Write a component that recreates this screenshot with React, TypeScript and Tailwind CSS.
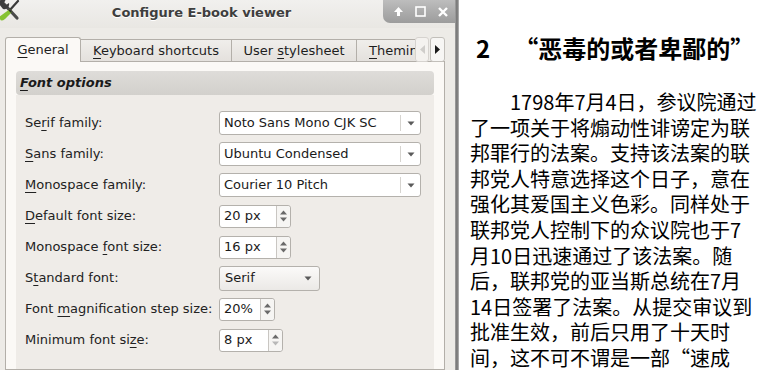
import React from "react";

const ui = { fontFamily: '"DejaVu Sans", "Liberation Sans", sans-serif' };
const cjk = { fontFamily: '"Noto Sans CJK SC", "Noto Sans", sans-serif' };

function U({ children }: { children: React.ReactNode }) {
  return <span className="underline underline-offset-[3px] decoration-1">{children}</span>;
}

function DownArrow({ color = "#5a5a5a" }: { color?: string }) {
  return (
    <svg width="8" height="5" viewBox="0 0 8 5">
      <path d="M0.5 0.5h7L4 4.5z" fill={color} />
    </svg>
  );
}

function Combo({ value, width }: { value: string; width: string }) {
  return (
    <div className={`flex h-[24px] ${width} items-stretch rounded-[3px] border border-[#b4b1ac] bg-white`}>
      <div className="flex flex-1 items-center pl-[4px] text-[13px] text-[#1a1a1a]">{value}</div>
      <div className="my-[3px] w-px bg-[#d6d4d0]" />
      <div className="flex w-[19px] items-center justify-center">
        <DownArrow />
      </div>
    </div>
  );
}

function Spin({ value, width, downOff }: { value: string; width: string; downOff?: boolean }) {
  return (
    <div className={`flex h-[23px] ${width} items-stretch rounded-[3px] border border-[#b4b1ac] bg-white`}>
      <div className="flex flex-1 items-center pl-[4px] text-[13px] text-[#1a1a1a]">{value}</div>
      <div className="flex w-[14px] flex-col items-center justify-center gap-[2px] rounded-r-[3px] border-l border-[#c9c6c2] bg-[#f6f5f3]">
        <svg width="7" height="5" viewBox="0 0 7 5">
          <path d="M0 4.5L3.5 0.5L7 4.5z" fill="#6a6a6a" />
        </svg>
        <svg width="7" height="5" viewBox="0 0 7 5">
          <path d="M0 0.5h7L3.5 4.5z" fill={downOff ? "#b8b8b8" : "#6a6a6a"} />
        </svg>
      </div>
    </div>
  );
}

function Row({ label, children }: { label: React.ReactNode; children: React.ReactNode }) {
  return (
    <div className="flex h-[24px] items-center">
      <div className="w-[194px] text-[13px] text-[#222]">{label}</div>
      {children}
    </div>
  );
}

// wrench + screwdriver, cut off at the window's left edge
function ToolIcon() {
  return (
    <svg width="20" height="24" viewBox="0 0 20 24">
      <path d="M4 4 L17 18" stroke="#4a4a4a" strokeWidth="3.2" strokeLinecap="round" />
      <path d="M-1 4 A5 5 0 0 1 6 -1 L4 3 L6 5 L9 3 A5 5 0 0 1 3 9 Z" fill="#3c3c3c" />
      <path d="M18 1 L9 11" stroke="#3a3a3a" strokeWidth="2.2" strokeLinecap="round" />
      <path d="M10 9 L12 12 L5 19 Q1 22 0 19 L-1 17 Z" fill="#86c232" />
      <path d="M10 9 L12 12 L11 13 L8.5 10.5 Z" fill="#2e2e2e" />
    </svg>
  );
}

const lines = [
  "了一项关于将煽动性诽谤定为联",
  "邦罪行的法案。支持该法案的联",
  "邦党人特意选择这个日子，意在",
  "强化其爱国主义色彩。同样处于",
  "联邦党人控制下的众议院也于7",
  "月10日迅速通过了该法案。随",
  "后，联邦党的亚当斯总统在7月",
  "14日签署了法案。从提交审议到",
  "批准生效，前后只用了十天时",
  "间，这不可不谓是一部“速成",
];

export default function App() {
  return (
    <div className="flex h-[370px] w-[773px] overflow-hidden bg-white">
      <div className="flex w-[455px] flex-col bg-[#edebe7]" style={ui}>
        <div className="flex h-[28px] items-start bg-gradient-to-b from-[#f1f0ee] to-[#e9e7e3]">
          <div className="h-[24px] w-[20px] overflow-hidden">
            <ToolIcon />
          </div>
          <div className="flex h-[26px] flex-1 items-center justify-center text-[13px] font-bold text-[#3e3e3e] [text-shadow:0_1px_0_#ffffff]">
            Configure E-book viewer
          </div>
          <div className="flex h-[23px] w-[72px] items-center justify-around rounded-bl-[7px] bg-gradient-to-b from-[#bdbdbd] to-[#9c9c9c] pl-[4px]">
            <svg width="11" height="11" viewBox="0 0 11 11">
              <path d="M5.5 1L10 6H7v4H4V6H1z" fill="#fff" />
            </svg>
            <svg width="11" height="11" viewBox="0 0 11 11">
              <rect x="1" y="1" width="9" height="9" fill="none" stroke="#fff" strokeWidth="1.6" />
            </svg>
            <svg width="12" height="12" viewBox="0 0 12 12">
              <path d="M2 2L10 10M10 2L2 10" stroke="#fff" strokeWidth="2.4" />
            </svg>
          </div>
        </div>

        <div className="flex flex-1 flex-col pl-[5px] pr-[10px] pt-[9px]">
          <div className="relative flex h-[24px] items-end text-[13px] text-[#1e1e1e]">
            <div className="relative z-10 -mb-px flex h-[25px] w-[76px] items-center justify-center rounded-t-[3px] border border-b-0 border-[#b3afa9] bg-[#fbf9f6]">
              <span>
                <U>G</U>eneral
              </span>
            </div>
            <div className="flex h-[22px] w-[151px] items-center justify-center border-t border-r border-[#b3afa9] bg-gradient-to-b from-[#f0eeeb] to-[#e4e1dd]">
              <span>
                <U>K</U>eyboard shortcuts
              </span>
            </div>
            <div className="flex h-[22px] w-[125px] items-center justify-center border-t border-r border-[#b3afa9] bg-gradient-to-b from-[#f0eeeb] to-[#e4e1dd]">
              <span>
                User <U>s</U>tylesheet
              </span>
            </div>
            <div className="flex h-[22px] w-[58px] items-center overflow-hidden whitespace-nowrap border-t border-[#b3afa9] bg-gradient-to-b from-[#f0eeeb] to-[#e4e1dd] pl-[12px]">
              <span>
                <U>T</U>heming
              </span>
            </div>
            <div className="absolute right-0 top-0 flex h-[25px] gap-px">
              <div className="flex w-[14px] items-center justify-center rounded-[3px] border border-[#d6d3cf] bg-[#f4f2ef]">
                <svg width="5" height="9" viewBox="0 0 5 9">
                  <path d="M5 0v9L0 4.5z" fill="#cfcdca" />
                </svg>
              </div>
              <div className="flex w-[15px] items-center justify-center rounded-[3px] border border-[#c2bfba] bg-[#f7f6f4]">
                <svg width="5" height="9" viewBox="0 0 5 9">
                  <path d="M0 0v9L5 4.5z" fill="#1a1a1a" />
                </svg>
              </div>
            </div>
          </div>

          <div className="flex flex-1 flex-col border border-[#b3afa9] bg-[#fbf9f6] px-[10px] pt-[9px]">
            <div className="flex h-[24px] items-center rounded-[4px] bg-gradient-to-b from-[#dedcd9] to-[#d2d0cc] pl-[4px] text-[13px] font-bold italic text-[#1a1a1a]">
              <span>
                <U>F</U>ont options
              </span>
            </div>
            <div className="flex flex-1 flex-col gap-[7px] bg-[#efece8] pl-[9px] pt-[16px]">
              <Row
                label={
                  <>
                    Se<U>r</U>if family:
                  </>
                }
              >
                <Combo value="Noto Sans Mono CJK SC" width="w-[202px]" />
              </Row>
              <Row
                label={
                  <>
                    <U>S</U>ans family:
                  </>
                }
              >
                <Combo value="Ubuntu Condensed" width="w-[202px]" />
              </Row>
              <Row
                label={
                  <>
                    <U>M</U>onospace family:
                  </>
                }
              >
                <Combo value="Courier 10 Pitch" width="w-[202px]" />
              </Row>
              <Row
                label={
                  <>
                    <U>D</U>efault font size:
                  </>
                }
              >
                <Spin value="20 px" width="w-[72px]" />
              </Row>
              <Row
                label={
                  <>
                    Monospace <U>f</U>ont size:
                  </>
                }
              >
                <Spin value="16 px" width="w-[72px]" />
              </Row>
              <Row
                label={
                  <>
                    S<U>t</U>andard font:
                  </>
                }
              >
                <div className="flex h-[25px] w-[101px] items-center justify-between rounded-[3px] border border-[#b4b1ac] bg-gradient-to-b from-[#fbfaf9] to-[#ebe9e6] pl-[5px] pr-[7px] text-[13px] text-[#1a1a1a]">
                  <span>Serif</span>
                  <DownArrow />
                </div>
              </Row>
              <Row
                label={
                  <>
                    Font <U>m</U>agnification step size:
                  </>
                }
              >
                <Spin value="20%" width="w-[56px]" />
              </Row>
              <Row
                label={
                  <>
                    Minimum font si<U>z</U>e:
                  </>
                }
              >
                <Spin value="8 px" width="w-[64px]" downOff />
              </Row>
            </div>
          </div>
        </div>
      </div>

      <div className="w-[4px] bg-gradient-to-r from-[#a5a5a5] via-[#6f6f6f] to-[#bdbdbd]" />

      <div className="flex-1 bg-white pl-[11px] pt-[34px] text-black" style={cjk} lang="zh-CN">
        <div className="flex h-[28px] items-center whitespace-nowrap pl-[6px] text-[24px] font-bold leading-[28px]">
          <span>2</span>
          <span className="ml-[24px]">“恶毒的或者卑鄙的”</span>
        </div>
        <div className="mt-[27px] text-[20px] leading-[25.6px]">
          <div className="whitespace-nowrap pl-[40px]">1798年7月4日，参议院通过</div>
          {lines.map((l) => (
            <div key={l} className="whitespace-nowrap">
              {l}
            </div>
          ))}
        </div>
      </div>
    </div>
  );
}
